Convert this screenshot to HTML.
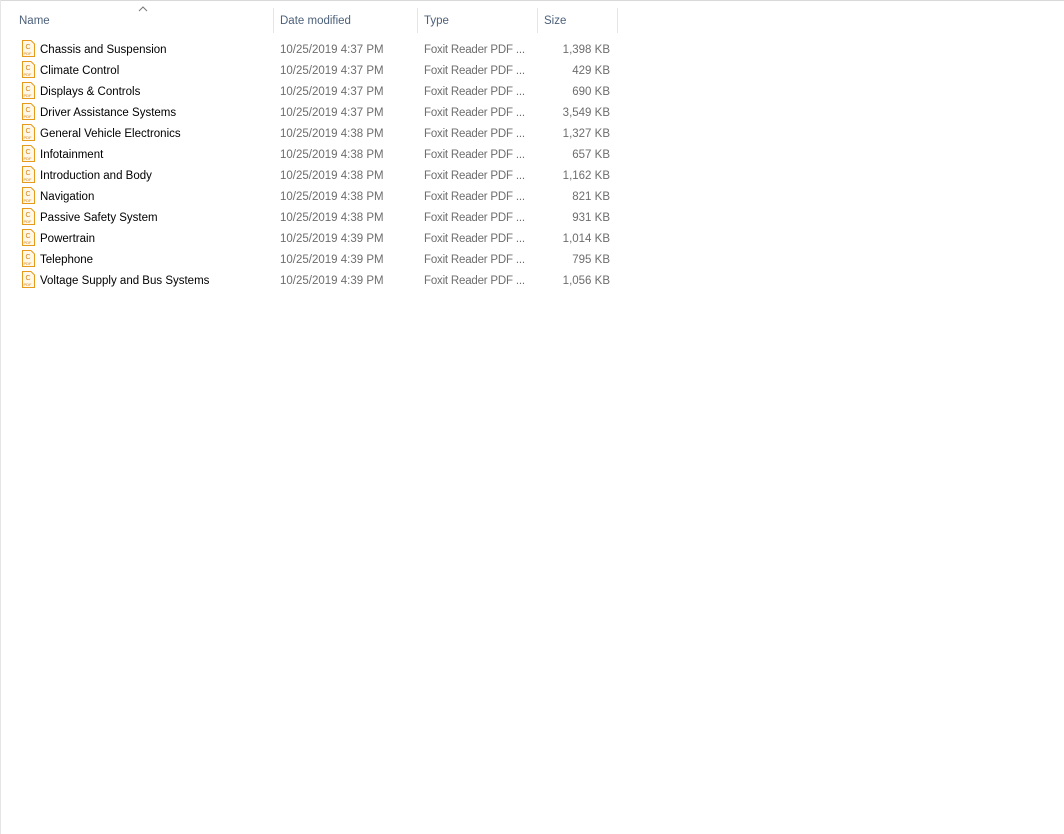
<!DOCTYPE html>
<html><head><style>
body{margin:0;width:1064px;height:834px;background:#fff;font-family:"Liberation Sans",sans-serif;font-size:11.5px;position:relative;overflow:hidden}
.top{position:absolute;left:0;top:0;width:1064px;height:1px;background:#d9d9d9}
.lft{position:absolute;left:0;top:0;width:1px;height:834px;background:#e5e5e5}
.sep{position:absolute;top:8px;width:1px;height:25px;background:#e5e5e5}
.h{position:absolute;top:15px;color:#4c607a}
.r{position:absolute;left:0;height:21px;width:620px}
.r span{position:absolute;top:5px;white-space:nowrap}
.n{left:40px;color:#000}
.d{left:280px;color:#6d6d6d}
.t{left:424px;color:#6d6d6d;letter-spacing:-0.2px}
.s{right:10px;color:#6d6d6d;text-align:right}
.r svg{position:absolute;left:22px;top:1px}
</style></head><body>
<div class="top"></div><div class="lft"></div>
<svg style="position:absolute;left:138px;top:6px" width="10" height="6"><path d="M1 5 L5 1 L9 5" fill="none" stroke="#777" stroke-width="1"/></svg>
<div class="h" style="left:19px">Name</div>
<div class="h" style="left:280px">Date modified</div>
<div class="h" style="left:424px">Type</div>
<div class="h" style="left:544px">Size</div>
<div class="sep" style="left:273px"></div><div class="sep" style="left:417px"></div><div class="sep" style="left:537px"></div><div class="sep" style="left:617px"></div>
<div class="r" style="top:39px"><svg width="13" height="17"><path d="M0.5 0.5H9L12.5 4V16.5H0.5Z" fill="#fff8e8" stroke="#e59a1d"/><text x="3.5" y="9" font-size="7" fill="#d9820f" font-family="Liberation Sans">C</text><text x="1.5" y="15" font-size="4" fill="#d9820f" font-family="Liberation Sans">PDF</text></svg><span class="n">Chassis and Suspension</span><span class="d">10/25/2019 4:37 PM</span><span class="t">Foxit Reader PDF ...</span><span class="s">1,398 KB</span></div>
<div class="r" style="top:60px"><svg width="13" height="17"><path d="M0.5 0.5H9L12.5 4V16.5H0.5Z" fill="#fff8e8" stroke="#e59a1d"/><text x="3.5" y="9" font-size="7" fill="#d9820f" font-family="Liberation Sans">C</text><text x="1.5" y="15" font-size="4" fill="#d9820f" font-family="Liberation Sans">PDF</text></svg><span class="n">Climate Control</span><span class="d">10/25/2019 4:37 PM</span><span class="t">Foxit Reader PDF ...</span><span class="s">429 KB</span></div>
<div class="r" style="top:81px"><svg width="13" height="17"><path d="M0.5 0.5H9L12.5 4V16.5H0.5Z" fill="#fff8e8" stroke="#e59a1d"/><text x="3.5" y="9" font-size="7" fill="#d9820f" font-family="Liberation Sans">C</text><text x="1.5" y="15" font-size="4" fill="#d9820f" font-family="Liberation Sans">PDF</text></svg><span class="n">Displays &amp; Controls</span><span class="d">10/25/2019 4:37 PM</span><span class="t">Foxit Reader PDF ...</span><span class="s">690 KB</span></div>
<div class="r" style="top:102px"><svg width="13" height="17"><path d="M0.5 0.5H9L12.5 4V16.5H0.5Z" fill="#fff8e8" stroke="#e59a1d"/><text x="3.5" y="9" font-size="7" fill="#d9820f" font-family="Liberation Sans">C</text><text x="1.5" y="15" font-size="4" fill="#d9820f" font-family="Liberation Sans">PDF</text></svg><span class="n">Driver Assistance Systems</span><span class="d">10/25/2019 4:37 PM</span><span class="t">Foxit Reader PDF ...</span><span class="s">3,549 KB</span></div>
<div class="r" style="top:123px"><svg width="13" height="17"><path d="M0.5 0.5H9L12.5 4V16.5H0.5Z" fill="#fff8e8" stroke="#e59a1d"/><text x="3.5" y="9" font-size="7" fill="#d9820f" font-family="Liberation Sans">C</text><text x="1.5" y="15" font-size="4" fill="#d9820f" font-family="Liberation Sans">PDF</text></svg><span class="n">General Vehicle Electronics</span><span class="d">10/25/2019 4:38 PM</span><span class="t">Foxit Reader PDF ...</span><span class="s">1,327 KB</span></div>
<div class="r" style="top:144px"><svg width="13" height="17"><path d="M0.5 0.5H9L12.5 4V16.5H0.5Z" fill="#fff8e8" stroke="#e59a1d"/><text x="3.5" y="9" font-size="7" fill="#d9820f" font-family="Liberation Sans">C</text><text x="1.5" y="15" font-size="4" fill="#d9820f" font-family="Liberation Sans">PDF</text></svg><span class="n">Infotainment</span><span class="d">10/25/2019 4:38 PM</span><span class="t">Foxit Reader PDF ...</span><span class="s">657 KB</span></div>
<div class="r" style="top:165px"><svg width="13" height="17"><path d="M0.5 0.5H9L12.5 4V16.5H0.5Z" fill="#fff8e8" stroke="#e59a1d"/><text x="3.5" y="9" font-size="7" fill="#d9820f" font-family="Liberation Sans">C</text><text x="1.5" y="15" font-size="4" fill="#d9820f" font-family="Liberation Sans">PDF</text></svg><span class="n">Introduction and Body</span><span class="d">10/25/2019 4:38 PM</span><span class="t">Foxit Reader PDF ...</span><span class="s">1,162 KB</span></div>
<div class="r" style="top:186px"><svg width="13" height="17"><path d="M0.5 0.5H9L12.5 4V16.5H0.5Z" fill="#fff8e8" stroke="#e59a1d"/><text x="3.5" y="9" font-size="7" fill="#d9820f" font-family="Liberation Sans">C</text><text x="1.5" y="15" font-size="4" fill="#d9820f" font-family="Liberation Sans">PDF</text></svg><span class="n">Navigation</span><span class="d">10/25/2019 4:38 PM</span><span class="t">Foxit Reader PDF ...</span><span class="s">821 KB</span></div>
<div class="r" style="top:207px"><svg width="13" height="17"><path d="M0.5 0.5H9L12.5 4V16.5H0.5Z" fill="#fff8e8" stroke="#e59a1d"/><text x="3.5" y="9" font-size="7" fill="#d9820f" font-family="Liberation Sans">C</text><text x="1.5" y="15" font-size="4" fill="#d9820f" font-family="Liberation Sans">PDF</text></svg><span class="n">Passive Safety System</span><span class="d">10/25/2019 4:38 PM</span><span class="t">Foxit Reader PDF ...</span><span class="s">931 KB</span></div>
<div class="r" style="top:228px"><svg width="13" height="17"><path d="M0.5 0.5H9L12.5 4V16.5H0.5Z" fill="#fff8e8" stroke="#e59a1d"/><text x="3.5" y="9" font-size="7" fill="#d9820f" font-family="Liberation Sans">C</text><text x="1.5" y="15" font-size="4" fill="#d9820f" font-family="Liberation Sans">PDF</text></svg><span class="n">Powertrain</span><span class="d">10/25/2019 4:39 PM</span><span class="t">Foxit Reader PDF ...</span><span class="s">1,014 KB</span></div>
<div class="r" style="top:249px"><svg width="13" height="17"><path d="M0.5 0.5H9L12.5 4V16.5H0.5Z" fill="#fff8e8" stroke="#e59a1d"/><text x="3.5" y="9" font-size="7" fill="#d9820f" font-family="Liberation Sans">C</text><text x="1.5" y="15" font-size="4" fill="#d9820f" font-family="Liberation Sans">PDF</text></svg><span class="n">Telephone</span><span class="d">10/25/2019 4:39 PM</span><span class="t">Foxit Reader PDF ...</span><span class="s">795 KB</span></div>
<div class="r" style="top:270px"><svg width="13" height="17"><path d="M0.5 0.5H9L12.5 4V16.5H0.5Z" fill="#fff8e8" stroke="#e59a1d"/><text x="3.5" y="9" font-size="7" fill="#d9820f" font-family="Liberation Sans">C</text><text x="1.5" y="15" font-size="4" fill="#d9820f" font-family="Liberation Sans">PDF</text></svg><span class="n">Voltage Supply and Bus Systems</span><span class="d">10/25/2019 4:39 PM</span><span class="t">Foxit Reader PDF ...</span><span class="s">1,056 KB</span></div>
</body></html>
